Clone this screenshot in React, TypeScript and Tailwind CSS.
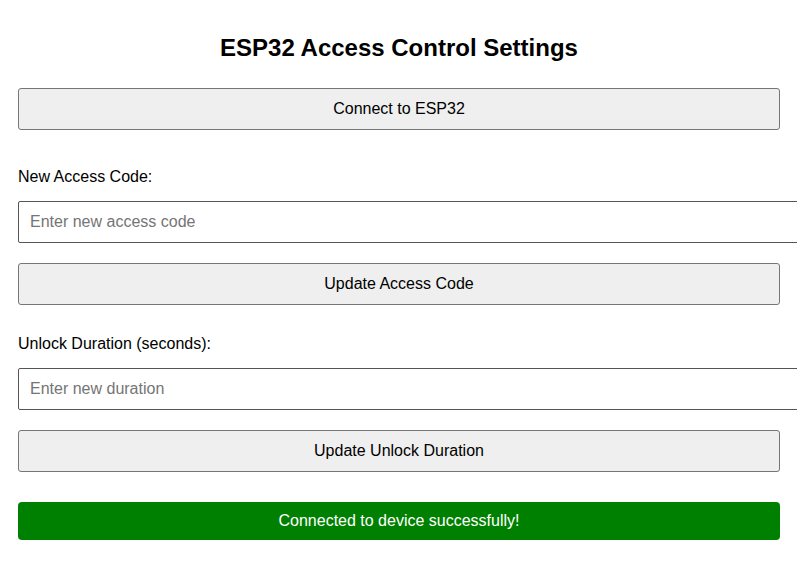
import { useState } from "react";

function GrayButton({ label }: { label: string }) {
  return (
    <button
      type="button"
      className="block h-[42px] w-full rounded-[3px] border border-[#767676] bg-[#efefef] text-[16px] text-black"
    >
      {label}
    </button>
  );
}

export default function App() {
  const [code, setCode] = useState("");
  const [duration, setDuration] = useState("");

  return (
    <div className="min-h-[573px] w-[797px] overflow-hidden bg-white pl-[18px] pr-[17px] font-['Liberation_Sans',Arial,sans-serif] text-black">
      <h1 className="pt-[34px] text-center text-[24px] font-bold leading-[28px]">
        ESP32 Access Control Settings
      </h1>

      <div className="mt-[26px]">
        <GrayButton label="Connect to ESP32" />
      </div>

      <label className="mt-[38px] block text-[16px] leading-[18px]">New Access Code:</label>
      <input
        value={code}
        onChange={(e) => setCode(e.target.value)}
        placeholder="Enter new access code"
        className="mt-[15px] block h-[42px] w-[788px] max-w-none rounded-[2px] border border-[#555] px-[11px] text-[16px] placeholder:text-[#757575] focus:outline-none"
      />
      <div className="mt-[20px]">
        <GrayButton label="Update Access Code" />
      </div>

      <label className="mt-[30px] block text-[16px] leading-[18px]">Unlock Duration (seconds):</label>
      <input
        value={duration}
        onChange={(e) => setDuration(e.target.value)}
        placeholder="Enter new duration"
        className="mt-[15px] block h-[42px] w-[788px] max-w-none rounded-[2px] border border-[#555] px-[11px] text-[16px] placeholder:text-[#757575] focus:outline-none"
      />
      <div className="mt-[20px]">
        <GrayButton label="Update Unlock Duration" />
      </div>

      <div className="mt-[30px] flex h-[38px] items-center justify-center rounded-[4px] bg-[#008000] text-[16px] text-white">
        Connected to device successfully!
      </div>
    </div>
  );
}
